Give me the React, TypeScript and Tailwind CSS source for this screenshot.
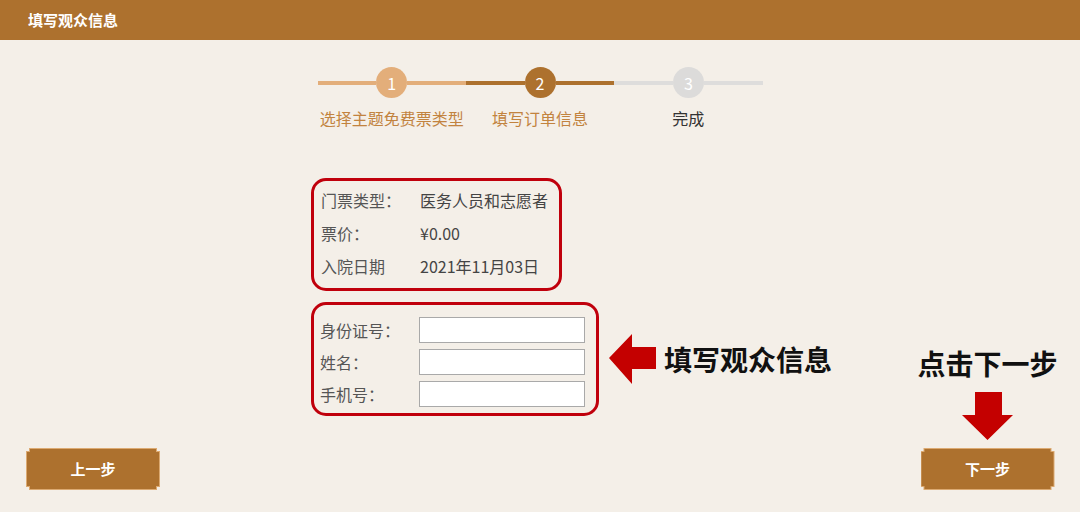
import React from 'react';

const FONT = "font-['Noto_Sans_CJK_SC','Noto_Sans',sans-serif]";

type Step = {
  num: number;
  label: string;
  line: string;
  circle: string;
  text: string;
};

const STEPS: Step[] = [
  { num: 1, label: '选择主题免费票类型', line: 'bg-[#e3ae7a]', circle: 'bg-[#e3ae7a]', text: 'text-[#c2833f]' },
  { num: 2, label: '填写订单信息', line: 'bg-[#ad712e]', circle: 'bg-[#ad712e]', text: 'text-[#c2833f]' },
  { num: 3, label: '完成', line: 'bg-[#dedddc]', circle: 'bg-[#dcdbda]', text: 'text-[#333333]' },
];

const INFO = [
  { label: '门票类型：', value: '医务人员和志愿者' },
  { label: '票价：', value: '¥0.00' },
  { label: '入院日期', value: '2021年11月03日' },
];

const FIELDS = ['身份证号：', '姓名：', '手机号：'];

function StepBar() {
  return (
    <div className="mx-auto flex w-[445px]">
      {STEPS.map((s) => (
        <div key={s.num} className="flex flex-1 flex-col items-center">
          <div className="flex w-full items-center">
            <div className={`h-1 flex-1 ${s.line}`} />
            <div
              className={`flex size-[31px] items-center justify-center rounded-full text-[16px] text-white ${s.circle}`}
            >
              {s.num}
            </div>
            <div className={`h-1 flex-1 ${s.line}`} />
          </div>
          <div className={`mt-[9px] text-[16px] leading-[22px] ${s.text}`}>{s.label}</div>
        </div>
      ))}
    </div>
  );
}

function NotchButton({ label }: { label: string }) {
  return (
    <div className="h-[42px] w-[134px] bg-[#dcaa72] [clip-path:polygon(3px_0,131px_0,131px_3px,134px_3px,134px_39px,131px_39px,131px_42px,3px_42px,3px_39px,0_39px,0_3px,3px_3px)]">
      <div className="flex h-[42px] w-[134px] items-center justify-center bg-[#ad712e] text-[15px] font-bold text-white [clip-path:polygon(4px_1px,130px_1px,130px_4px,133px_4px,133px_38px,130px_38px,130px_41px,4px_41px,4px_38px,1px_38px,1px_4px,4px_4px)]">
        {label}
      </div>
    </div>
  );
}

function LeftArrow() {
  return (
    <svg width="47" height="50" viewBox="0 0 47 50">
      <polygon points="0,24 23,0 23,13 47,13 47,35 23,35 23,50" fill="#c40000" />
    </svg>
  );
}

function DownArrow() {
  return (
    <svg width="51" height="48" viewBox="0 0 51 48">
      <polygon points="13,0 40,0 40,23 51,23 25.5,48 0,23 13,23" fill="#c40000" />
    </svg>
  );
}

export default function App() {
  return (
    <div className={`h-[512px] w-[1080px] overflow-hidden bg-[#f4efe8] ${FONT}`}>
      <header className="flex h-10 items-center bg-[#ad712e] pl-[28px] text-[15px] font-bold text-white">
        填写观众信息
      </header>

      <div className="flex h-[472px]">
        {/* 左侧：上一步 */}
        <div className="flex w-[160px] flex-col justify-end pb-[22px] pl-[26px]">
          <NotchButton label="上一步" />
        </div>

        {/* 中间：步骤 + 表单 */}
        <div className="flex-1 pt-[27px]">
          <StepBar />

          <div className="mt-[49px] pl-[151px]">
            <div className="w-[251px] rounded-[15px] border-[3px] border-[#c0000c] px-[7px] pt-[2px] pb-[6px] text-[16px]">
              {INFO.map((row) => (
                <div key={row.label} className="flex h-[33px] items-center">
                  <span className="w-[99px] text-[#555555]">{row.label}</span>
                  <span className="text-[#444444]">{row.value}</span>
                </div>
              ))}
            </div>

            <div className="mt-[11px] flex items-center">
              <div className="flex w-[288px] flex-col gap-[6px] rounded-[15px] border-[3px] border-[#c0000c] pt-[12px] pr-[11px] pb-[6px] pl-[6px] text-[16px]">
                {FIELDS.map((f) => (
                  <div key={f} className="flex items-center">
                    <span className="w-[101px] text-[#555555]">{f}</span>
                    <input
                      type="text"
                      className="h-[26px] w-[166px] border border-[#a9a9a9] bg-white px-1 outline-none"
                    />
                  </div>
                ))}
              </div>
              <div className="ml-[10px]">
                <LeftArrow />
              </div>
              <span className="ml-[8px] whitespace-nowrap text-[28px] font-bold leading-[36px] text-[#111111]">
                填写观众信息
              </span>
            </div>
          </div>
        </div>

        {/* 右侧：提示 + 下一步 */}
        <div className="flex w-[160px] flex-col items-center justify-end pr-[25px] pb-[22px]">
          <span className="whitespace-nowrap text-[28px] font-bold leading-[36px] text-[#111111]">点击下一步</span>
          <div className="mt-[11px]">
            <DownArrow />
          </div>
          <div className="mt-[8px]">
            <NotchButton label="下一步" />
          </div>
        </div>
      </div>
    </div>
  );
}
